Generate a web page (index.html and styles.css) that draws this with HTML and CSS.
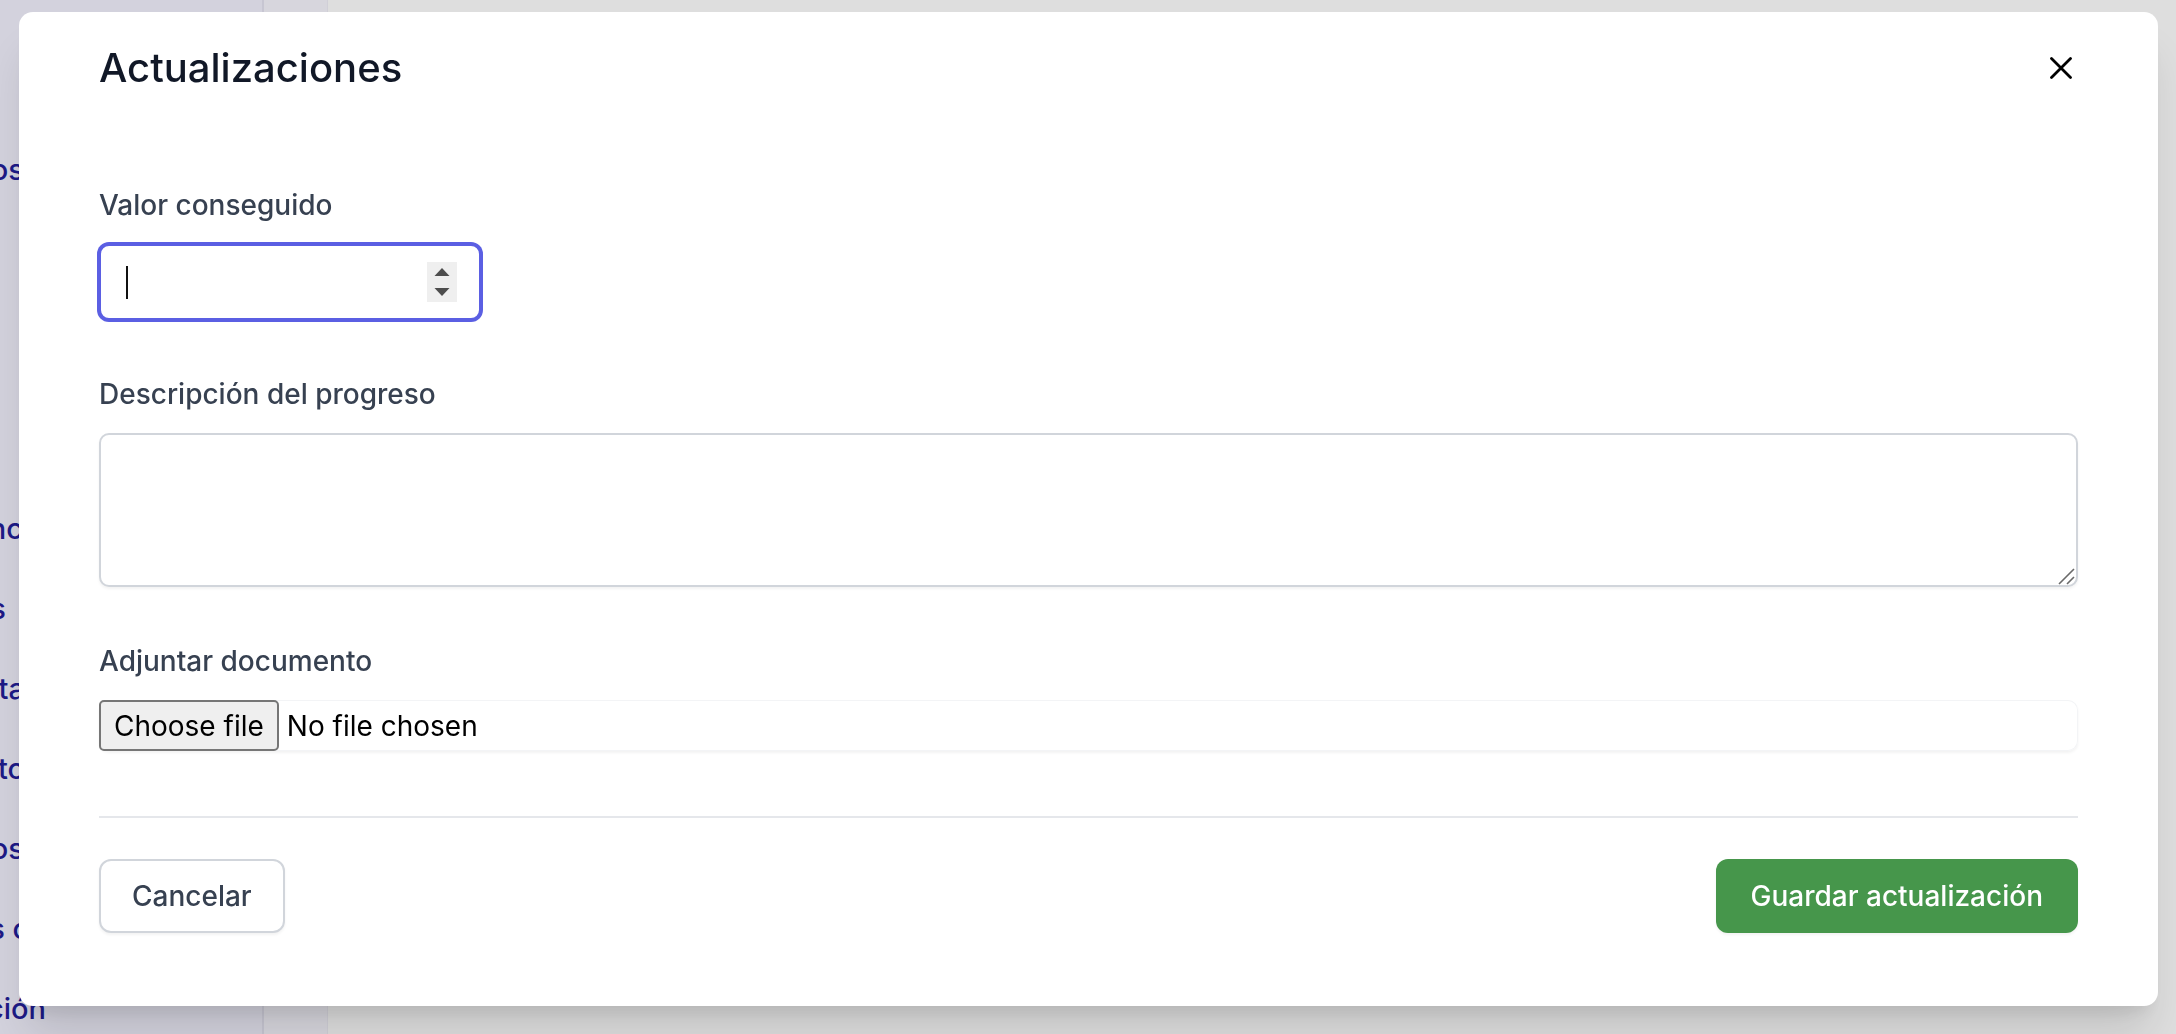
FILE: index.html
```html
<!DOCTYPE html>
<html lang="es">
<head>
<meta charset="utf-8">
<title>Actualizaciones</title>
<link rel="stylesheet" href="styles.css">
</head>
<body>
<div class="app">
  <aside class="sidebar">
    <nav class="nav">
      <a class="nav-item end-24">Objetivos</a>
      <div class="nav-group">
        <a class="nav-item end-40">Balance</a>
        <a class="nav-item end-6">Informes</a>
        <a class="nav-item end-25">Consulta</a>
        <a class="nav-item end-25">Presupuesto</a>
        <a class="nav-item end-24">Documentos</a>
        <a class="nav-item end-209">Mis convocatorias</a>
        <a class="nav-item end-46">Configuración</a>
      </div>
    </nav>
  </aside>
  <div class="rail"></div>
  <main class="main"></main>
</div>

<div class="overlay">
  <section class="modal" role="dialog" aria-labelledby="modal-title">
    <header class="modal-header">
      <h2 id="modal-title" class="modal-title">Actualizaciones</h2>
      <button class="close-btn" type="button" aria-label="Cerrar">
        <svg width="22" height="22" viewBox="0 0 22 22"><path d="M1.5 1.5 L20.5 20.5 M20.5 1.5 L1.5 20.5" stroke="#000" stroke-width="2.8" stroke-linecap="round" fill="none"/></svg>
      </button>
    </header>

    <div class="field first">
      <label class="field-label">Valor conseguido</label>
      <div class="num-input">
        <span class="caret"></span>
        <span class="spinner">
          <svg width="30" height="40" viewBox="0 0 30 40"><path d="M7.5 14 L15 6 L22.5 14 Z" fill="#4d4d4d"/><path d="M7.5 26 L22.5 26 L15 34 Z" fill="#4d4d4d"/></svg>
        </span>
      </div>
    </div>

    <div class="field">
      <label class="field-label">Descripción del progreso</label>
      <div class="textarea-wrap">
        <textarea class="textarea"></textarea>
        <svg class="grip" width="17" height="17" viewBox="0 0 17 17"><path d="M1 16 L16 1 M9 16 L16 9" stroke="#6a6a6a" stroke-width="1.6" fill="none"/></svg>
      </div>
    </div>

    <div class="field">
      <label class="field-label">Adjuntar documento</label>
      <div class="file-input">
        <span class="file-btn">Choose file</span>
        <span class="file-name">No file chosen</span>
      </div>
    </div>

    <hr class="divider">

    <footer class="modal-footer">
      <button class="btn btn-cancel" type="button">Cancelar</button>
      <button class="btn btn-save" type="button">Guardar actualización</button>
    </footer>
  </section>
</div>
</body>
</html>
```

FILE: styles.css
```css
* { box-sizing: border-box; margin: 0; padding: 0; }

html, body { width: 2176px; height: 1034px; }

body {
  font-family: Inter, "Noto Sans", sans-serif;
  background: #dedede;
  overflow: hidden;
}

.app {
  display: flex;
  height: 1034px;
}

.sidebar {
  width: 264px;
  flex: none;
  background: #d3d2dd;
  border-right: 2px solid #c7c6d2;
}

.nav {
  display: flex;
  flex-direction: column;
  padding-top: 130px;
}

.nav-group {
  display: flex;
  flex-direction: column;
  margin-top: 279px;
}

.nav-item {
  display: flex;
  justify-content: flex-end;
  height: 80px;
  line-height: 80px;
  white-space: nowrap;
  font-size: 29px;
  font-weight: 500;
  color: #1d1a86;
}

.end-6 { width: 6px; }
.end-24 { width: 24px; }
.end-25 { width: 25px; }
.end-40 { width: 40px; }
.end-46 { width: 46px; }
.end-209 { width: 209px; }

.rail {
  width: 64px;
  flex: none;
  background: #d7d6dd;
  border-right: 1px solid #d0cfd7;
}

.main {
  flex: 1;
  background: #dedede;
}

/* Modal */
.overlay {
  position: fixed;
  inset: 0;
  padding: 12px 18px 0 19px;
  display: flex;
  align-items: flex-start;
}

.modal {
  flex: 1;
  background: #fff;
  border-radius: 14px;
  padding: 28px 80px 73px 80px;
  box-shadow: 0 35px 44px -9px rgba(0, 0, 0, 0.12), 0 14px 18px -10px rgba(0, 0, 0, 0.1);
}

.modal-header {
  display: flex;
  align-items: center;
  justify-content: space-between;
  height: 56px;
}

.modal-title {
  font-size: 40px;
  line-height: 56px;
  font-weight: 500;
  color: #111827;
}

.close-btn {
  width: 34px;
  height: 34px;
  display: flex;
  align-items: center;
  justify-content: center;
  background: none;
  border: 0;
}

.field { margin-top: 53px; }
.field.first { margin-top: 88px; }

.field-label {
  display: block;
  font-size: 28px;
  line-height: 42px;
  font-weight: 500;
  color: #374151;
  margin-bottom: 18px;
}

.num-input {
  width: 382px;
  height: 76px;
  border: 2px solid #5b5fe3;
  box-shadow: 0 0 0 2px #5b5fe3;
  border-radius: 10px;
  display: flex;
  align-items: center;
  justify-content: space-between;
  padding: 0 22px 0 25px;
  background: #fff;
}

.caret {
  width: 2px;
  height: 33px;
  background: #111;
}

.spinner {
  width: 30px;
  height: 40px;
  background: #efefef;
  display: flex;
}

.textarea-wrap {
  position: relative;
}

.textarea {
  display: block;
  width: 100%;
  height: 154px;
  border: 2px solid #d1d5db;
  border-radius: 10px;
  box-shadow: 0 2px 3px rgba(0, 0, 0, 0.05);
  resize: none;
  outline: none;
  background: #fff;
}

.grip {
  position: absolute;
  right: 3px;
  bottom: 2px;
}

.file-input {
  height: 51px;
  display: flex;
  align-items: center;
  border: 1px solid #f3f4f6;
  border-left: 0;
  border-radius: 10px;
  box-shadow: 0 2px 3px rgba(0, 0, 0, 0.05);
  font-size: 28px;
  color: #000;
}

.file-btn {
  height: 51px;
  display: flex;
  align-items: center;
  padding: 0 13px;
  background: #efefef;
  border: 2px solid #767676;
  border-radius: 5px;
}

.file-name {
  margin-left: 8px;
}

.divider {
  margin-top: 65px;
  height: 2px;
  border: 0;
  background: #e5e7eb;
}

.modal-footer {
  margin-top: 41px;
  display: flex;
  justify-content: space-between;
}

.btn {
  height: 74px;
  display: flex;
  align-items: center;
  font-family: Inter, "Noto Sans", sans-serif;
  font-size: 28px;
  font-weight: 500;
  border-radius: 12px;
}

.btn-cancel {
  padding: 0 31px;
  background: #fff;
  color: #374151;
  border: 2px solid #d1d5db;
  box-shadow: 0 2px 3px rgba(0, 0, 0, 0.05);
}

.btn-save {
  padding: 0 35px;
  background: #46964b;
  color: #fff;
  border: 0;
  box-shadow: 0 2px 3px rgba(0, 0, 0, 0.05);
}
```
